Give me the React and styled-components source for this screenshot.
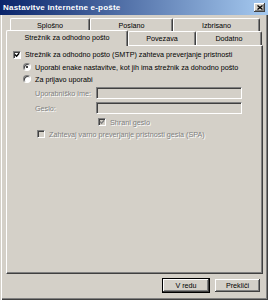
import React from 'react';
import styled, { createGlobalStyle } from 'styled-components';

const Color = {
  face: '#d4d0c8',
  light: '#ffffff',
  shadow: '#808080',
  dark: '#404040',
  disabled: '#808080',
};

const GlobalStyle = createGlobalStyle`
  html, body {
    margin: 0;
    padding: 0;
    background: ${Color.face};
  }
  body {
    font-family: "Liberation Sans", Arial, sans-serif;
    font-size: 7.2px;
    color: #000;
  }
`;

const Window = styled.div`
  width: 268px;
  height: 300px;
  display: flex;
  flex-direction: column;
  background: ${Color.face};
  overflow: hidden;
`;

const TitleBar = styled.div`
  height: 15px;
  flex: none;
  display: flex;
  align-items: center;
  justify-content: space-between;
  padding: 0 3px 0 3px;
  background: linear-gradient(to right, #0a246a, #a6caf0);
  color: #fff;
  font-weight: bold;
  font-size: 8px;
  letter-spacing: 0.2px;
`;

const CloseButton = styled.div`
  width: 11px;
  height: 9px;
  display: flex;
  align-items: center;
  justify-content: center;
  background: ${Color.face};
  box-shadow: inset -1px -1px ${Color.dark}, inset 1px 1px ${Color.light},
    inset -2px -2px ${Color.shadow};
`;

const Body = styled.div`
  flex: 1;
  display: flex;
  flex-direction: column;
  padding: 3px 5px 0 6px;
  box-shadow: inset 1px 0 ${Color.face}, inset 2px 0 ${Color.light},
    inset -1px -1px ${Color.dark}, inset -2px -2px ${Color.shadow};
`;

const TabRow = styled.div`
  display: flex;
  height: ${(p) => p.height}px;
  padding-left: ${(p) => p.indent}px;
  align-items: flex-end;
`;

const Tab = styled.div`
  width: ${(p) => p.width}px;
  height: ${(p) => (p.active ? p.height + 2 : p.height)}px;
  margin-bottom: ${(p) => (p.active ? -1 : 0)}px;
  box-sizing: border-box;
  display: flex;
  align-items: center;
  justify-content: center;
  background: ${Color.face};
  border-top: 1px solid ${Color.light};
  border-left: 1px solid ${Color.light};
  border-right: 1px solid ${Color.dark};
  border-top-left-radius: 2px;
  border-top-right-radius: 2px;
  box-shadow: inset -1px 0 ${Color.shadow};
  position: relative;
  z-index: ${(p) => (p.active ? 2 : 1)};
  padding-bottom: ${(p) => (p.active ? 2 : 0)}px;
`;

const Panel = styled.div`
  height: 229px;
  width: 257px;
  box-sizing: border-box;
  display: flex;
  flex-direction: column;
  padding: 2px 0 0 6px;
  border-top: 1px solid ${Color.light};
  border-left: 1px solid ${Color.light};
  border-right: 1px solid ${Color.dark};
  border-bottom: 1px solid ${Color.dark};
  box-shadow: inset -1px -1px ${Color.shadow};
`;

const Row = styled.div`
  display: flex;
  align-items: center;
  height: ${(p) => p.h || 12}px;
  margin-top: ${(p) => p.gap || 0}px;
  padding-left: ${(p) => p.indent || 0}px;
  color: ${(p) => (p.disabled ? Color.disabled : '#000')};
  text-shadow: ${(p) => (p.disabled ? `1px 1px ${Color.light}` : 'none')};
  white-space: nowrap;
`;

const Box = styled.span`
  width: 8px;
  height: 8px;
  flex: none;
  box-sizing: border-box;
  margin-right: 4px;
  display: flex;
  align-items: center;
  justify-content: center;
  background: ${(p) => (p.disabled ? Color.face : Color.light)};
  border-top: 1px solid ${Color.shadow};
  border-left: 1px solid ${Color.shadow};
  border-bottom: 1px solid ${Color.light};
  border-right: 1px solid ${Color.light};
  box-shadow: inset 1px 1px ${Color.dark};
`;

const Radio = styled.span`
  width: 8px;
  height: 8px;
  flex: none;
  box-sizing: border-box;
  margin-right: 4px;
  border-radius: 50%;
  display: flex;
  align-items: center;
  justify-content: center;
  background: ${Color.light};
  border: 1px solid;
  border-color: ${Color.shadow} ${Color.light} ${Color.light} ${Color.shadow};
  box-shadow: inset 1px 1px ${Color.dark};
`;

const Dot = styled.span`
  width: 2px;
  height: 2px;
  border-radius: 50%;
  background: #000;
`;

const Label = styled.span`
  width: ${(p) => p.width}px;
  flex: none;
`;

const Field = styled.div`
  width: 146px;
  height: 12px;
  box-sizing: border-box;
  background: ${Color.face};
  border-top: 1px solid ${Color.shadow};
  border-left: 1px solid ${Color.shadow};
  border-bottom: 1px solid ${Color.light};
  border-right: 1px solid ${Color.light};
  box-shadow: inset 1px 1px ${Color.dark};
`;

const Footer = styled.div`
  display: flex;
  justify-content: flex-end;
  gap: 4px;
  padding: 4px 2px 0 0;
`;

const Button = styled.div`
  width: ${(p) => p.width}px;
  height: 15px;
  box-sizing: border-box;
  display: flex;
  align-items: center;
  justify-content: center;
  background: ${Color.face};
  border: 1px solid ${(p) => (p.primary ? '#000' : 'transparent')};
  box-shadow: inset -1px -1px ${Color.dark}, inset 1px 1px ${Color.light},
    inset -2px -2px ${Color.shadow};
`;

const Check = ({ color }) => (
  <svg width="6" height="6" viewBox="0 0 7 7">
    <path d="M1 3 L3 5 L6 1.5" fill="none" stroke={color} strokeWidth="1.6" />
  </svg>
);

function App() {
  return (
    <Window>
      <GlobalStyle />
      <TitleBar>
        <span>Nastavitve internetne e-pošte</span>
        <CloseButton>
          <svg width="6" height="5" viewBox="0 0 6 5">
            <path d="M0.5 0.5 L5.5 4.5 M5.5 0.5 L0.5 4.5" stroke="#000" strokeWidth="1.3" />
          </svg>
        </CloseButton>
      </TitleBar>
      <Body>
        <TabRow height={13} indent={4}>
          <Tab width={80} height={13}>Splošno</Tab>
          <Tab width={83} height={13}>Poslano</Tab>
          <Tab width={87} height={13}>Izbrisano</Tab>
        </TabRow>
        <TabRow height={14} indent={0}>
          <Tab width={122} height={14} active>Strežnik za odhodno pošto</Tab>
          <Tab width={68} height={14}>Povezava</Tab>
          <Tab width={66} height={14}>Dodatno</Tab>
        </TabRow>
        <Panel>
          <Row h={13}>
            <Box>
              <Check color="#000" />
            </Box>
            Strežnik za odhodno pošto (SMTP) zahteva preverjanje pristnosti
          </Row>
          <Row indent={10}>
            <Radio>
              <Dot />
            </Radio>
            Uporabi enake nastavitve, kot jih ima strežnik za dohodno pošto
          </Row>
          <Row indent={10}>
            <Radio />
            Za prijavo uporabi
          </Row>
          <Row indent={22} gap={2} disabled>
            <Label width={61}>Uporabniško ime:</Label>
            <Field />
          </Row>
          <Row indent={22} gap={3} disabled>
            <Label width={61}>Geslo:</Label>
            <Field />
          </Row>
          <Row indent={85} gap={2} disabled>
            <Box disabled>
              <Check color={Color.shadow} />
            </Box>
            Shrani geslo
          </Row>
          <Row indent={24} disabled>
            <Box disabled />
            Zahtevaj varno preverjanje pristnosti gesla (SPA)
          </Row>
        </Panel>
        <Footer>
          <Button width={48} primary>V redu</Button>
          <Button width={47}>Prekliči</Button>
        </Footer>
      </Body>
    </Window>
  );
}

export default App;
